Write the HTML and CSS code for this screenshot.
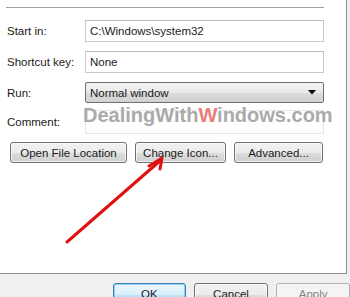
FILE: index.html
```html
<!DOCTYPE html>
<html>
<head>
<meta charset="utf-8">
<link rel="stylesheet" href="styles.css">
</head>
<body>
<div class="panel">
  <div class="sep"></div>
  <div class="form">
    <div class="row r1">
      <span class="label">Start in:</span>
      <div class="field">C:\Windows\system32</div>
    </div>
    <div class="row r2">
      <span class="label">Shortcut key:</span>
      <div class="field">None</div>
    </div>
    <div class="row r3">
      <span class="label">Run:</span>
      <div class="select">
        <span>Normal window</span>
        <svg class="caret" width="8" height="5" viewBox="0 0 8 5"><path d="M0 0H8L4 4.5Z" fill="#000"/></svg>
      </div>
    </div>
    <div class="row r4">
      <span class="label">Comment:</span>
      <div class="field faint"></div>
      <div class="watermark">DealingWith<em>W</em>indows.com</div>
    </div>
    <div class="btnrow">
      <div class="btn b1">Open File Location</div>
      <div class="btn b2">Change Icon...</div>
      <div class="btn b3">Advanced...</div>
    </div>
  </div>
  <svg class="arrow" width="346" height="273" viewBox="0 0 346 273">
    <path d="M67 242 L161 160" stroke="#e01010" stroke-width="3" stroke-linecap="round" fill="none"/>
    <path d="M149 166 L162 158 L160 169" stroke="#e01010" stroke-width="3" stroke-linecap="round" stroke-linejoin="round" fill="none"/>
  </svg>
</div>
<div class="footer">
  <div class="btn ok">OK</div>
  <div class="btn cancel">Cancel</div>
  <div class="btn apply">Apply</div>
</div>
</body>
</html>
```
FILE: styles.css
```css
html, body {
  margin: 0;
  padding: 0;
}
body {
  width: 350px;
  height: 297px;
  overflow: hidden;
  background: #f0f0f0;
  font-family: "Liberation Sans", Arial, sans-serif;
  font-size: 11px;
  color: #1a1a1a;
}
.panel {
  position: relative;
  width: 346px;
  height: 273px;
  background: #fff;
  border-right: 1px solid #8e8f8f;
  border-bottom: 1px solid #8e8f8f;
  box-sizing: content-box;
}
.sep {
  margin: 0 0 0 6px;
  padding-top: 7px;
  width: 318px;
  height: 0;
  border-bottom: 1px solid #a0a0a0;
  box-sizing: content-box;
}
.form {
  padding-top: 12px;
}
.row {
  position: relative;
  display: grid;
  grid-template-columns: 78px 239px;
  align-items: center;
  padding-left: 7px;
}
.r1 { margin-top: 0; height: 22px; }
.r2 { margin-top: 9px; height: 22px; }
.r3 { margin-top: 9px; height: 21px; }
.r4 { margin-top: 7px; height: 24px; }
.label {
  font-size: 11.5px;
}
.field {
  height: 22px;
  box-sizing: border-box;
  border: 1px solid #c9c9c9;
  border-top-color: #b9b9b9;
  background: #fff;
  padding-left: 4px;
  line-height: 20px;
  font-size: 11.5px;
}
.r4 .field { height: 24px; }
.field.faint {
  border-color: #e6e6e6;
}
.select {
  height: 21px;
  box-sizing: border-box;
  border: 1px solid #707070;
  border-radius: 2px;
  background: linear-gradient(#f4f4f4, #e8e8e8 50%, #dadada 51%, #d2d2d2);
  display: flex;
  align-items: center;
  justify-content: space-between;
  padding: 0 7px 0 4px;
  font-size: 11.5px;
}
.caret { display: block; }
.watermark {
  position: absolute;
  left: 83px;
  top: -6px;
  font-family: "Liberation Sans", Arial, sans-serif;
  font-weight: bold;
  font-size: 20px;
  color: #aaaaaa;
}
.watermark em {
  font-style: normal;
  color: #ec7b7b;
}
.btnrow {
  display: flex;
  margin-top: 8px;
  padding-left: 10px;
  gap: 9px;
}
.btn {
  height: 21px;
  box-sizing: border-box;
  border: 1px solid #707070;
  border-radius: 3px;
  background: linear-gradient(#f2f2f2, #ebebeb 50%, #dddddd 51%, #cfcfcf);
  display: flex;
  align-items: center;
  justify-content: center;
  font-size: 11.5px;
  box-shadow: inset 0 0 0 1px rgba(255,255,255,0.7);
}
.b1 { width: 117px; }
.b2 { width: 91px; margin-left: -1px; }
.b3 { width: 89px; margin-left: -1px; }
.arrow {
  position: absolute;
  left: 0;
  top: 0;
  pointer-events: none;
}
.footer {
  display: flex;
  padding-left: 113px;
  padding-top: 9px;
  gap: 8px;
}
.footer .btn {
  height: 23px;
  padding-bottom: 1px;
}
.ok {
  width: 73px;
  border-color: #3c7fb1;
  background: linear-gradient(#eaf6fd, #d9f0fc 50%, #bee6fd 51%, #a7d9f5);
  box-shadow: inset 0 0 0 1px #8ed0f3;
}
.cancel { width: 75px; }
.apply {
  width: 74px;
  border-color: #adb2b5;
  background: #f4f4f4;
  color: #838383;
  box-shadow: none;
}
```
